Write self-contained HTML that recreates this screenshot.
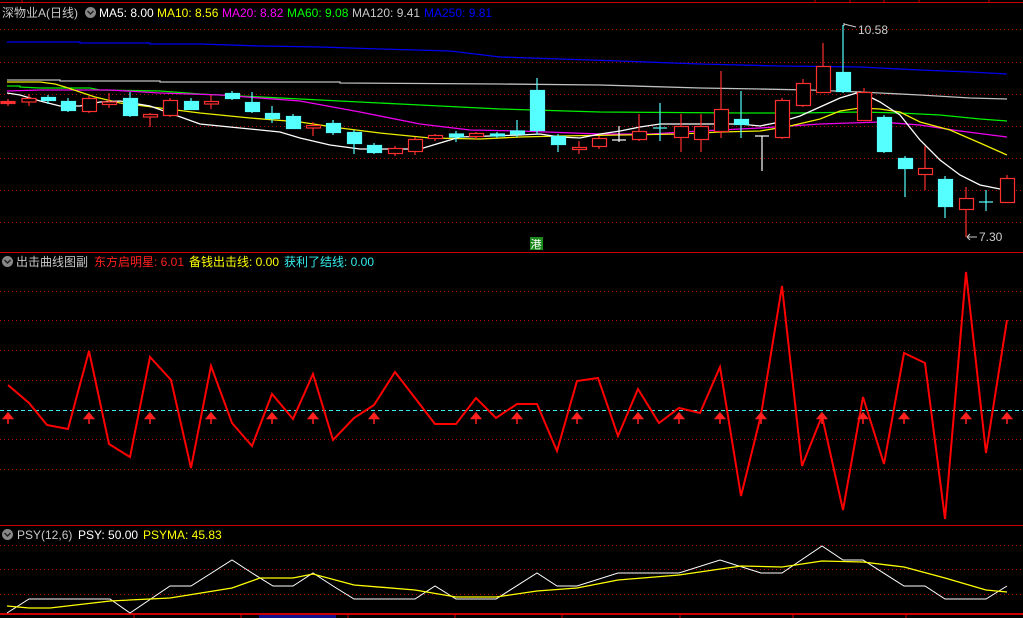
<!DOCTYPE html>
<html><head><meta charset="utf-8"><style>
html,body{margin:0;padding:0;background:#000;width:1023px;height:618px;overflow:hidden}
svg{display:block}
text{font-family:"Liberation Sans","Noto Sans CJK SC",sans-serif;font-size:12px}
</style></head><body>
<svg width="1023" height="618" viewBox="0 0 1023 618" xmlns="http://www.w3.org/2000/svg">
<rect width="1023" height="618" fill="#000"/>
<line x1="0" y1="2.5" x2="1023" y2="2.5" stroke="#c00" stroke-width="1"/>
<line x1="22" y1="0" x2="22" y2="3" stroke="#c00"/>
<line x1="815" y1="0" x2="815" y2="3" stroke="#c00"/><line x1="850" y1="0" x2="850" y2="3" stroke="#c00"/><line x1="884" y1="0" x2="884" y2="3" stroke="#c00"/><line x1="919" y1="0" x2="919" y2="3" stroke="#c00"/><line x1="989" y1="0" x2="989" y2="3" stroke="#c00"/>
<line x1="0" y1="252.5" x2="1023" y2="252.5" stroke="#c00"/>
<line x1="0" y1="525.5" x2="1023" y2="525.5" stroke="#c00"/>
<line x1="0" y1="614" x2="1023" y2="614" stroke="#c00" stroke-width="2"/>
<g stroke="#c00"><line x1="134" y1="614" x2="134" y2="618"/><line x1="241" y1="614" x2="241" y2="618"/><line x1="348" y1="614" x2="348" y2="618"/><line x1="455" y1="614" x2="455" y2="618"/><line x1="562" y1="614" x2="562" y2="618"/><line x1="680" y1="614" x2="680" y2="618"/><line x1="793" y1="614" x2="793" y2="618"/><line x1="906" y1="614" x2="906" y2="618"/></g>
<rect x="259" y="615" width="77" height="3" fill="#10108a"/>
<g stroke="#a00" stroke-dasharray="1,3" stroke-width="1">
<line x1="0" y1="29.5" x2="1023" y2="29.5"/><line x1="0" y1="62.5" x2="1023" y2="62.5"/><line x1="0" y1="94.5" x2="1023" y2="94.5"/><line x1="0" y1="126.5" x2="1023" y2="126.5"/><line x1="0" y1="158.5" x2="1023" y2="158.5"/><line x1="0" y1="190.5" x2="1023" y2="190.5"/><line x1="0" y1="222.5" x2="1023" y2="222.5"/>
<line x1="0" y1="291.5" x2="1023" y2="291.5"/><line x1="0" y1="320.5" x2="1023" y2="320.5"/><line x1="0" y1="350.5" x2="1023" y2="350.5"/><line x1="0" y1="380.5" x2="1023" y2="380.5"/><line x1="0" y1="439.5" x2="1023" y2="439.5"/><line x1="0" y1="469.5" x2="1023" y2="469.5"/>
<line x1="0" y1="545.5" x2="1023" y2="545.5"/><line x1="0" y1="569.5" x2="1023" y2="569.5"/><line x1="0" y1="594.5" x2="1023" y2="594.5"/>
</g>
<g fill="none" stroke-width="1.3">
<polyline stroke="#0000ee" points="7,42 80,42 80,43 150,43 150,44 200,44 260,46 320,47 380,49 450,51 500,57 560,59 620,61 700,64 780,66 860,67 920,70 970,72 1007,74"/>
<polyline stroke="#c0c0c0" points="7,80 60,80 60,81 160,81 160,82 340,82 340,83 500,84 600,85 700,88 760,89 810,90 860,92 920,95 970,98 1007,99"/>
<polyline stroke="#00ee00" points="7,86 20,86 20,87 40,88 90,88 100,90 160,91 200,94 300,99 400,104 500,109 600,112 741,113 800,113 860,112 900,113 940,115 980,119 1007,121"/>
<polyline stroke="#ee00ee" points="7,91 40,90 110,90 160,93 220,95 300,101 360,112 420,124 470,130 520,131 600,134 650,134 700,131 760,128 820,124 880,122 920,125 960,131 1007,137"/>
<polyline stroke="#eeee00" points="7,82 40,82 55,84 65,87 80,92 95,97 120,103 160,108 200,113 250,118 300,122 340,128 380,133 430,138 480,139 520,137 560,136 620,135 680,134 720,132 760,131 790,126 820,119 840,111 860,108 880,109 900,112 920,122 950,130 980,143 1007,155"/>
<polyline stroke="#ffffff" points="7,93 20,95 40,101 60,106 80,106 100,102 120,101 150,106 175,115 200,124 240,128 280,132 300,138 330,145 360,149 390,149 420,149 440,143 460,137 490,136 520,135 540,134 560,137 580,138 600,134 620,131 640,127 660,124 700,124 740,124 760,126 780,122 800,116 820,107 840,98 860,92 880,102 900,115 920,140 940,160 960,175 980,185 1000,189 1007,190"/>
</g>
<g stroke-width="1.2">
<g stroke="#ff3030" fill="#000">
<line x1="8" y1="99" x2="8" y2="106"/><rect x="1" y="101.5" width="14" height="2" fill="#ff3030"/>
<line x1="29" y1="94" x2="29" y2="106"/><rect x="22" y="98.5" width="14" height="3.5"/>
<line x1="89" y1="96" x2="89" y2="113"/><rect x="82.5" y="98.5" width="14" height="13"/>
<line x1="109" y1="93" x2="109" y2="108"/><rect x="102.5" y="102" width="14" height="2.5"/>
<line x1="150" y1="113" x2="150" y2="127"/><rect x="143.5" y="114.5" width="14" height="2.5"/>
<line x1="170" y1="98" x2="170" y2="117"/><rect x="163.5" y="100.5" width="14" height="15"/>
<line x1="211" y1="95" x2="211" y2="109"/><rect x="204.5" y="101.5" width="14" height="2.5"/>
<line x1="313" y1="122" x2="313" y2="136"/><rect x="306.5" y="125.5" width="14" height="2.5"/>
<line x1="395" y1="146" x2="395" y2="156"/><rect x="388.5" y="148.5" width="14" height="5"/>
<line x1="415" y1="137" x2="415" y2="155"/><rect x="408.5" y="139.5" width="14" height="12"/>
<line x1="435" y1="134" x2="435" y2="141"/><rect x="428.5" y="135.5" width="14" height="3"/>
<line x1="476" y1="132" x2="476" y2="139"/><rect x="469.5" y="133.5" width="14" height="3"/>
<line x1="579" y1="141" x2="579" y2="154"/><rect x="572.5" y="147.5" width="14" height="2"/>
<line x1="599" y1="136" x2="599" y2="149"/><rect x="592.5" y="138.5" width="14" height="8"/>
<line x1="639" y1="114" x2="639" y2="141"/><rect x="632.5" y="131.5" width="14" height="8"/>
<line x1="681" y1="114" x2="681" y2="152"/><rect x="674.5" y="126.5" width="14" height="11"/>
<line x1="701" y1="114" x2="701" y2="152"/><rect x="694.5" y="126.5" width="14" height="13"/>
<line x1="721" y1="71" x2="721" y2="138"/><rect x="714.5" y="109.5" width="14" height="22"/>
<line x1="782" y1="98" x2="782" y2="139"/><rect x="775.5" y="100.5" width="14" height="37"/>
<line x1="803" y1="79" x2="803" y2="107"/><rect x="796.5" y="83.5" width="14" height="22"/>
<line x1="823" y1="43" x2="823" y2="93"/><rect x="816.5" y="66.5" width="14" height="26"/>
<line x1="864" y1="88" x2="864" y2="121"/><rect x="857.5" y="92.5" width="14" height="28"/>
<line x1="925" y1="146" x2="925" y2="190"/><rect x="918.5" y="168.5" width="14" height="6"/>
<line x1="966" y1="187" x2="966" y2="237"/><rect x="959.5" y="198.5" width="14" height="11"/>
<line x1="1007" y1="175" x2="1007" y2="178"/><rect x="1000.5" y="178.5" width="14" height="24"/>
</g>
<g stroke="#55ffff" fill="#55ffff">
<line x1="48" y1="95" x2="48" y2="104"/><rect x="41.5" y="97.5" width="14" height="3"/>
<line x1="68" y1="98" x2="68" y2="112"/><rect x="61.5" y="101.5" width="14" height="9"/>
<line x1="130" y1="92" x2="130" y2="117"/><rect x="123.5" y="98.5" width="14" height="17"/>
<line x1="191" y1="98" x2="191" y2="110"/><rect x="184.5" y="101.5" width="14" height="8"/>
<line x1="232" y1="91" x2="232" y2="100"/><rect x="225.5" y="93.5" width="14" height="5"/>
<line x1="252" y1="92" x2="252" y2="113"/><rect x="245.5" y="102.5" width="14" height="9"/>
<line x1="272" y1="106" x2="272" y2="123"/><rect x="265.5" y="113.5" width="14" height="5"/>
<line x1="293" y1="114" x2="293" y2="129"/><rect x="286.5" y="116.5" width="14" height="12"/>
<line x1="333" y1="120" x2="333" y2="135"/><rect x="326.5" y="123.5" width="14" height="9"/>
<line x1="354" y1="130" x2="354" y2="154"/><rect x="347.5" y="132.5" width="14" height="11"/>
<line x1="374" y1="143" x2="374" y2="154"/><rect x="367.5" y="145.5" width="14" height="7"/>
<line x1="456" y1="131" x2="456" y2="142"/><rect x="449.5" y="134" width="14" height="3"/>
<line x1="497" y1="132" x2="497" y2="138"/><rect x="490.5" y="134" width="14" height="2"/>
<line x1="517" y1="120" x2="517" y2="137"/><rect x="510.5" y="131" width="14" height="3"/>
<line x1="537" y1="78" x2="537" y2="135"/><rect x="530.5" y="90.5" width="14" height="40"/>
<line x1="558" y1="134" x2="558" y2="152"/><rect x="551.5" y="136.5" width="14" height="8"/>
<line x1="660" y1="103" x2="660" y2="141"/><line x1="653" y1="128" x2="667" y2="128"/>
<line x1="741" y1="91" x2="741" y2="138"/><rect x="734.5" y="119.5" width="14" height="5"/>
<line x1="843" y1="25" x2="843" y2="93"/><rect x="836.5" y="72.5" width="14" height="19"/>
<line x1="884" y1="115" x2="884" y2="153"/><rect x="877.5" y="117.5" width="14" height="34"/>
<line x1="905" y1="156" x2="905" y2="197"/><rect x="898.5" y="158.5" width="14" height="10"/>
<line x1="945" y1="176" x2="945" y2="218"/><rect x="938.5" y="179.5" width="14" height="27"/>
<line x1="986" y1="190" x2="986" y2="211"/><line x1="979" y1="202" x2="993" y2="202"/>
</g>
<g stroke="#fff">
<line x1="619" y1="126" x2="619" y2="142"/><line x1="612" y1="140" x2="626" y2="140"/>
<line x1="762" y1="136" x2="762" y2="171"/><line x1="755" y1="136" x2="769" y2="136"/>
</g>
</g>
<path d="M844,26 L844,23 M844,24 L856,27" stroke="#ccc" fill="none"/>
<text x="858" y="34" fill="#ccc">10.58</text>
<path d="M967,237 L977,237 M967,237 L970,234 M967,237 L970,240" stroke="#ccc" fill="none"/>
<text x="979" y="241" fill="#ccc">7.30</text>
<rect x="530" y="237" width="13" height="13" fill="#1a8a1a"/>
<text x="530.5" y="248" fill="#fff" style="font-size:11px">港</text>
<text x="2" y="17" fill="#c8c8c8">深物业A(日线)</text>
<circle cx="90.5" cy="12.5" r="5.5" fill="#888"/><path d="M87.5,11 L90.5,14 L93.5,11" stroke="#222" stroke-width="1.5" fill="none"/>
<text x="99" y="17" fill="#fff">MA5: 8.00</text>
<text x="157" y="17" fill="#ffff00">MA10: 8.56</text>
<text x="222" y="17" fill="#ff00ff">MA20: 8.82</text>
<text x="287" y="17" fill="#00ff00">MA60: 9.08</text>
<text x="352" y="17" fill="#c8c8c8">MA120: 9.41</text>
<text x="424" y="17" fill="#0000ff">MA250: 9.81</text>
<circle cx="7.5" cy="261.5" r="5.5" fill="#888"/><path d="M4.5,260 L7.5,263 L10.5,260" stroke="#222" stroke-width="1.5" fill="none"/>
<text x="16" y="266" fill="#c8c8c8">出击曲线图副</text>
<text x="94" y="266" fill="#ff2020">东方启明星: 6.01</text>
<text x="189" y="266" fill="#ffff00">备钱出击线: 0.00</text>
<text x="284" y="266" fill="#33eeee">获利了结线: 0.00</text>
<line x1="0" y1="410.5" x2="1023" y2="410.5" stroke="#33eeee" stroke-dasharray="4,3"/>
<polyline fill="none" stroke="#ff0000" stroke-width="2" points="8,385 29,403 47,425 68,429 89,351 109,444 130,457 150,357 171,380 191,468 211,366 232,423 252,446 272,394 293,419 313,374 333,440 354,418 374,405 395,372 415,398 435,424 456,424 476,398 496,418 517,404 537,404 557,451 577,381 598,378 618,436 638,389 659,423 679,408 700,413 720,367 741,496 761,415 782,286 802,466 822,416 843,510 863,397 884,464 904,353 925,363 945,519 966,272 986,453 1007,320"/>
<g fill="#ff2020" stroke="#ff2020" stroke-width="2">
<path id="ar" d="M8,413 L3.5,418.5 L12.5,418.5 Z M8,418 L8,424" stroke-width="1.5"/>
<use href="#ar" x="81"/><use href="#ar" x="142"/><use href="#ar" x="203"/><use href="#ar" x="264"/><use href="#ar" x="305"/><use href="#ar" x="366"/><use href="#ar" x="468"/><use href="#ar" x="509"/><use href="#ar" x="569"/><use href="#ar" x="630"/><use href="#ar" x="671"/><use href="#ar" x="712"/><use href="#ar" x="753"/><use href="#ar" x="814"/><use href="#ar" x="855"/><use href="#ar" x="896"/><use href="#ar" x="958"/><use href="#ar" x="999"/>
</g>
<circle cx="7.5" cy="534.5" r="5.5" fill="#888"/><path d="M4.5,533 L7.5,536 L10.5,533" stroke="#222" stroke-width="1.5" fill="none"/>
<text x="17" y="539" fill="#c8c8c8">PSY(12,6)</text>
<text x="78" y="539" fill="#fff">PSY: 50.00</text>
<text x="143" y="539" fill="#ffff00">PSYMA: 45.83</text>
<polyline fill="none" stroke="#fff" stroke-width="1" points="7,613 29,599 110,599 130,613 170,586 191,586 232,560 252,573 273,586 293,586 313,573 333,586 354,599 415,599 435,586 456,599 496,599 537,573 557,586 577,586 618,573 679,573 720,560 761,573 782,573 822,546 843,560 863,560 904,586 925,586 945,599 986,599 1007,586"/>
<polyline fill="none" stroke="#ffff00" stroke-width="1.3" points="7,606 29,608 50,608 110,601 170,598 232,588 260,578 293,578 313,574 354,585 415,590 456,597 496,597 537,591 577,588 618,580 679,575 741,566 782,567 822,561 863,562 904,567 945,578 986,590 1007,592"/>
</svg>
</body></html>
